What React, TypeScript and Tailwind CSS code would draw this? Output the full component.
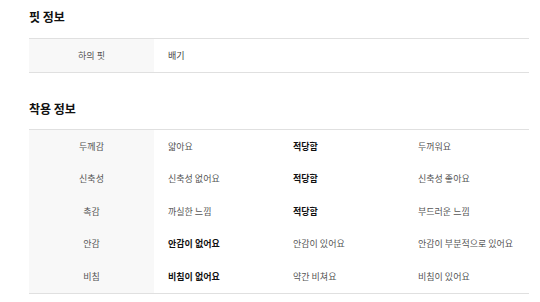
import React from "react";

const font = { fontFamily: '"Noto Sans CJK KR", "Noto Sans", sans-serif' };

type Cell = { t: string; b?: boolean };

const wear: { label: string; cells: Cell[] }[] = [
  { label: "두께감", cells: [{ t: "얇아요" }, { t: "적당함", b: true }, { t: "두꺼워요" }] },
  { label: "신축성", cells: [{ t: "신축성 없어요" }, { t: "적당함", b: true }, { t: "신축성 좋아요" }] },
  { label: "촉감", cells: [{ t: "까실한 느낌" }, { t: "적당함", b: true }, { t: "부드러운 느낌" }] },
  { label: "안감", cells: [{ t: "안감이 없어요", b: true }, { t: "안감이 있어요" }, { t: "안감이 부분적으로 있어요" }] },
  { label: "비침", cells: [{ t: "비침이 없어요", b: true }, { t: "약간 비쳐요" }, { t: "비침이 있어요" }] },
];

export default function App() {
  return (
    <div className="w-[540px] h-[302px] bg-white overflow-hidden" style={font}>
      <div className="ml-[29px] w-[500px]">
        <h2 className="pt-[8px] h-[38px] text-[12px] leading-[17px] font-bold text-[#111]">핏 정보</h2>
        <div className="border-t border-b border-[#e0e0e0]">
          <div className="grid grid-cols-4 h-[33px] items-stretch text-[9px]">
            <div className="bg-[#f8f8f8] flex items-center justify-center text-[#555]">하의 핏</div>
            <div className="col-span-3 flex items-center pl-[14px] text-[#444]">배기</div>
          </div>
        </div>
        <h2 className="pt-[27px] h-[56px] text-[12px] leading-[17px] font-bold text-[#111]">착용 정보</h2>
        <div className="border-t border-b border-[#e0e0e0]">
          {wear.map((r) => (
            <div key={r.label} className="grid grid-cols-4 h-[32.6px] text-[9px]">
              <div className="bg-[#f8f8f8] flex items-center justify-center text-[#555]">{r.label}</div>
              {r.cells.map((c, i) => (
                <div
                  key={i}
                  className={`flex items-center pl-[14px] ${c.b ? "font-bold text-[#111]" : "text-[#555]"}`}
                >
                  {c.t}
                </div>
              ))}
            </div>
          ))}
        </div>
      </div>
    </div>
  );
}
